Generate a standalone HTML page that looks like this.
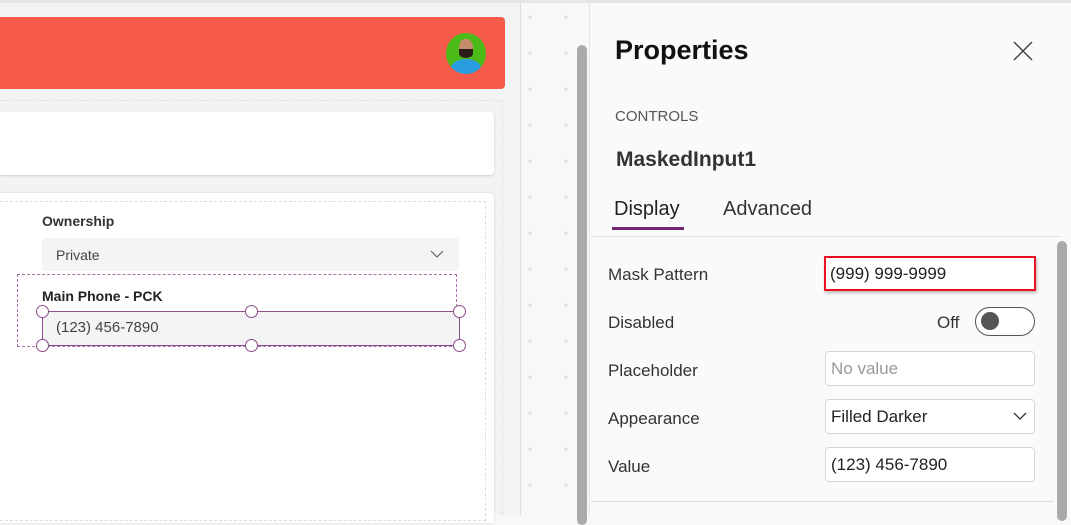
<!DOCTYPE html>
<html><head><style>
*{margin:0;padding:0;box-sizing:border-box}
body{width:1071px;height:515px;overflow:hidden;position:relative;background:#f8f8f8;font-family:"Segoe UI","Liberation Sans",sans-serif}
.a{position:absolute}
.lbl{position:absolute;left:608px;font-size:17px;color:#333}
.inp{position:absolute;left:825px;width:210px;height:35px;border:1px solid #d6d6d6;border-radius:4px;background:#fff;font-size:17px;color:#222;padding:7px 0 0 5px}
.h{position:absolute;width:13px;height:13px;border:1.5px solid #8a4c8a;border-radius:50%;background:#fff}
</style></head><body>
<div class="a" style="left:0;top:0;width:521px;height:515px;background:#f3f3f3;border-right:1px solid #e0e0e0"></div>
<div class="a" style="left:0;top:0;width:1071px;height:3px;background:#e6e6e6"></div>
<div class="a" style="left:0;top:17px;width:505px;height:72px;background:#f55a4a;border-radius:0 4px 4px 0"></div>
<div class="a" style="left:446px;top:33px;width:40px;height:41px;border-radius:50%;background:#4cbb17;overflow:hidden">
<div class="a" style="left:13px;top:6px;width:14px;height:18px;border-radius:45%;background:#c58c6a"></div>
<div class="a" style="left:13px;top:16px;width:14px;height:9px;border-radius:0 0 50% 50%;background:#2b1e18"></div>
<div class="a" style="left:5px;top:26px;width:30px;height:18px;border-radius:50% 50% 0 0;background:#2a9de0"></div></div>
<div class="a" style="left:0;top:100px;width:503px;height:415px;border:1px dashed #e2e2e2;border-left:none;border-bottom:none"></div>
<div class="a" style="left:0;top:112px;width:494px;height:63px;background:#fff;border-radius:0 4px 4px 0;box-shadow:0 1px 2px #ccc"></div>
<div class="a" style="left:0;top:193px;width:494px;height:330px;background:#fff;border-radius:0 4px 0 0;box-shadow:0 0 2px #ccc"></div>
<div class="a" style="left:0;top:201px;width:486px;height:320px;border:1px dashed #ddd;border-left:none"></div>
<div class="a" style="left:42px;top:213px;font-size:14px;font-weight:bold;color:#333">Ownership</div>
<div class="a" style="left:42px;top:238px;width:417px;height:33px;background:#f4f4f4;border-radius:3px;font-size:14px;color:#444;padding:9px 0 0 14px">Private</div>
<svg class="a" style="left:430px;top:250px" width="14" height="9"><path d="M1 1l6 6 6-6" fill="none" stroke="#666" stroke-width="1.2"/></svg>
<div class="a" style="left:17px;top:274px;width:440px;height:73px;border:1px dashed #a873a8"></div>
<div class="a" style="left:42px;top:288px;font-size:14px;font-weight:bold;color:#222">Main Phone - PCK</div>
<div class="a" style="left:42px;top:311px;width:418px;height:35px;background:#f4f4f4;border:1.5px solid #8a4c8a;font-size:15px;color:#444;padding:7px 0 0 13px">(123) 456-7890</div>
<div class="h" style="left:36px;top:305px"></div><div class="h" style="left:245px;top:305px"></div><div class="h" style="left:453px;top:305px"></div>
<div class="h" style="left:36px;top:339px"></div><div class="h" style="left:245px;top:339px"></div><div class="h" style="left:453px;top:339px"></div>
<svg class="a" style="left:521px;top:0" width="68" height="515">
<defs><pattern id="d" x="0" y="-1" width="36" height="36" patternUnits="userSpaceOnUse"><circle cx="9" cy="18" r="1.6" fill="#ddd"/><circle cx="45" cy="18" r="1.6" fill="#ddd"/></pattern></defs>
<rect x="0" y="0" width="68" height="515" fill="url(#d)"/></svg>
<div class="a" style="left:577px;top:45px;width:10px;height:480px;background:#aaa;border-radius:5px"></div>
<div class="a" style="left:589px;top:3px;width:482px;height:512px;background:#fafafa;border-left:1px solid #e4e4e4"></div>
<div class="a" style="left:615px;top:35px;font-size:27px;font-weight:600;color:#111">Properties</div>
<svg class="a" style="left:1013px;top:41px" width="20" height="20"><path d="M1 1l18 18M19 1L1 19" stroke="#444" stroke-width="1.5"/></svg>
<div class="a" style="left:615px;top:108px;font-size:15px;color:#555">CONTROLS</div>
<div class="a" style="left:616px;top:148px;font-size:21px;font-weight:600;color:#333">MaskedInput1</div>
<div class="a" style="left:614px;top:198px;font-size:20px;color:#222">Display</div>
<div class="a" style="left:723px;top:198px;font-size:20px;color:#333">Advanced</div>
<div class="a" style="left:612px;top:227px;width:72px;height:3px;background:#742774"></div>
<div class="a" style="left:591px;top:236px;width:470px;height:1px;background:#ddd"></div>
<div class="a" style="left:1057px;top:241px;width:10px;height:280px;background:#aaa;border-radius:5px"></div>
<div class="lbl" style="top:265px">Mask Pattern</div>
<div class="inp" style="top:256px;border:2px solid #e81123;border-radius:0;left:824px;width:212px;box-shadow:1px 2px 3px #bbb;padding-top:6px;padding-left:4px">(999) 999-9999</div>
<div class="lbl" style="top:313px">Disabled</div>
<div class="a" style="left:937px;top:313px;font-size:17px;color:#333">Off</div>
<div class="a" style="left:975px;top:307px;width:60px;height:29px;border:1px solid #555;border-radius:15px;background:#fff"></div>
<div class="a" style="left:981px;top:312px;width:18px;height:18px;border-radius:50%;background:#555"></div>
<div class="lbl" style="top:361px">Placeholder</div>
<div class="inp" style="top:351px;color:#999">No value</div>
<div class="lbl" style="top:409px">Appearance</div>
<div class="inp" style="top:399px">Filled Darker</div>
<svg class="a" style="left:1013px;top:412px" width="14" height="9"><path d="M1 1l6 6 6-6" fill="none" stroke="#333" stroke-width="1.3"/></svg>
<div class="lbl" style="top:457px">Value</div>
<div class="inp" style="top:447px">(123) 456-7890</div>
<div class="a" style="left:591px;top:501px;width:463px;height:1px;background:#ddd"></div>
</body></html>
